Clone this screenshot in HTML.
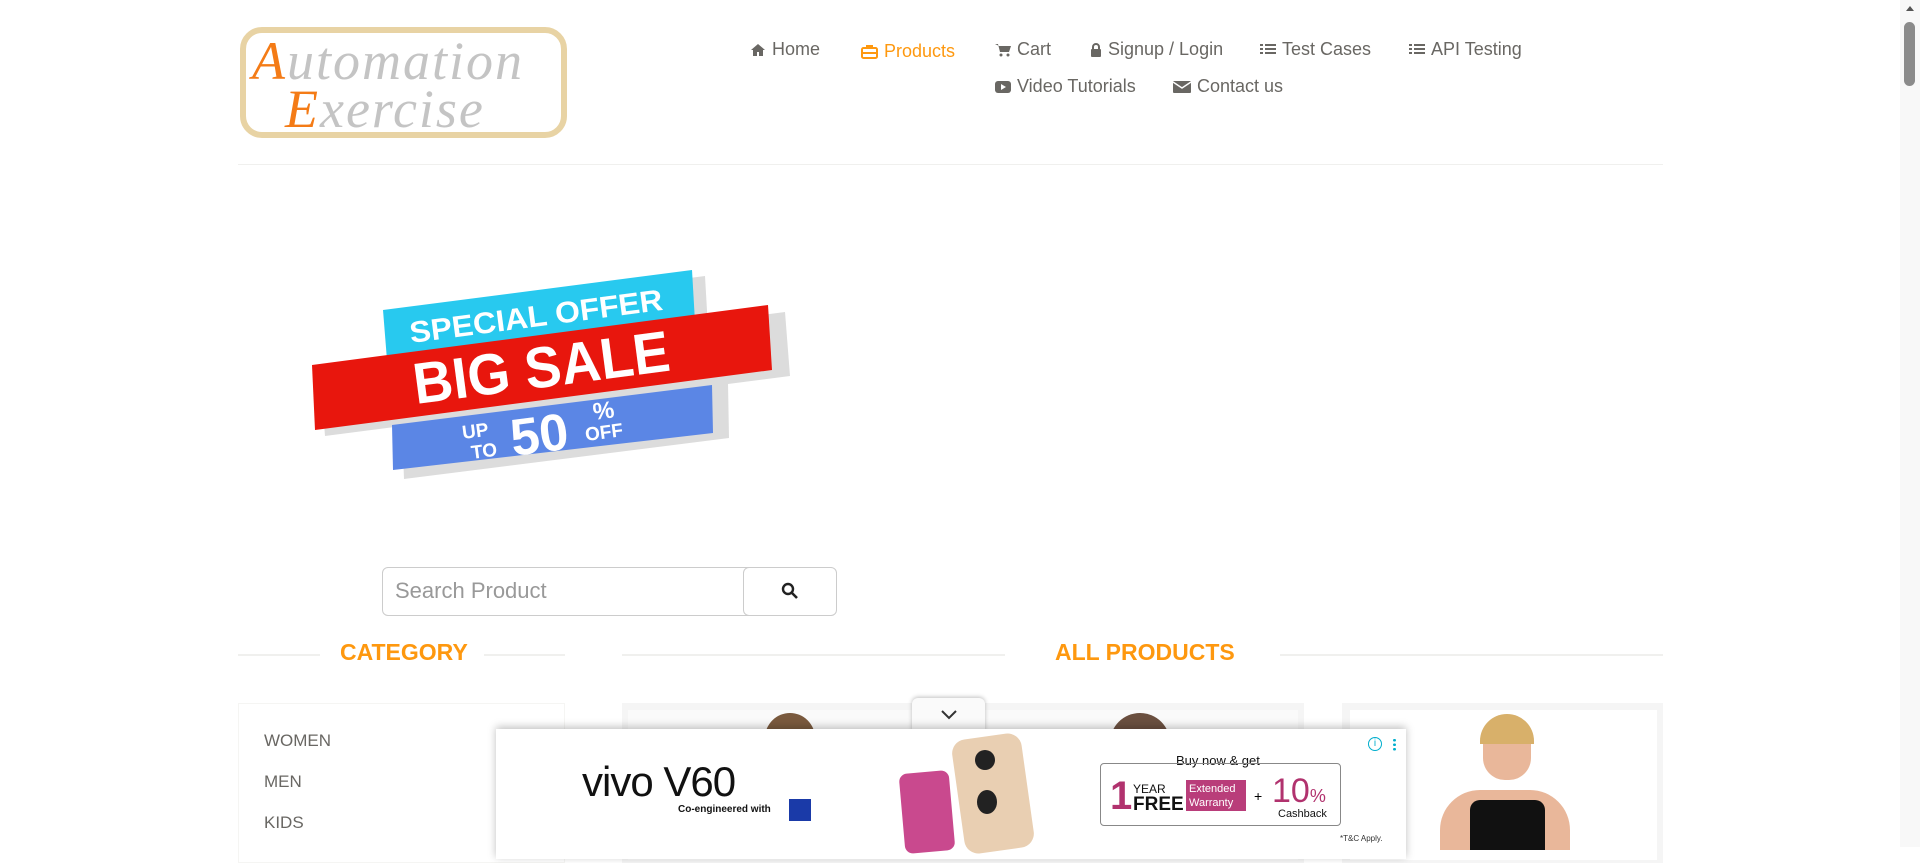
<!DOCTYPE html>
<html><head><meta charset="utf-8"><style>
*{margin:0;padding:0;box-sizing:border-box}
body{width:1920px;height:847px;overflow:hidden;background:#fff;font-family:"Liberation Sans",Arial,sans-serif;position:relative}
.abs{position:absolute}
.nav{color:#696763;font-size:18px;white-space:nowrap}
.nav svg{vertical-align:-2px;margin-right:6px}
.hline{position:absolute;height:2px;background:#f0f0ee}
.title{position:absolute;color:#FE980F;font-weight:bold;font-size:23px}
.cat{position:absolute;left:264px;color:#696763;font-size:17px}
</style></head><body>

<!-- logo -->
<div class="abs" style="left:240px;top:27px;width:327px;height:111px;border:6px solid #e8d3a4;border-radius:22px;background:#fff"></div>
<div class="abs" style="left:252px;top:30px;font-family:'Liberation Serif',serif;font-style:italic;font-size:54px;color:#c4c4c4;letter-spacing:2px"><span style="color:#f47b16">A</span>utomation</div>
<div class="abs" style="left:285px;top:78px;font-family:'Liberation Serif',serif;font-style:italic;font-size:54px;color:#c4c4c4;letter-spacing:2px"><span style="color:#f47b16">E</span>xercise</div>

<!-- nav -->
<div class="abs nav" style="left:750px;top:39px"><svg width="16" height="14" viewBox="0 0 16 14"><path d="M8 1L1 7h2v6h4V9h2v4h4V7h2z" fill="#696763"/></svg>Home</div>
<div class="abs nav" style="left:861px;top:41px;color:#FE980F"><svg width="17" height="14" viewBox="0 0 17 14"><rect x="1" y="3" width="15" height="10" rx="1.5" fill="none" stroke="#FE980F" stroke-width="2"/><path d="M6 3V1h5v2M1 8h15" stroke="#FE980F" stroke-width="2" fill="none"/></svg>Products</div>
<div class="abs nav" style="left:995px;top:39px"><svg width="16" height="14" viewBox="0 0 16 14"><path d="M0 1h3l2 8h9l2-6H4" fill="#696763"/><circle cx="6" cy="12" r="1.5" fill="#696763"/><circle cx="13" cy="12" r="1.5" fill="#696763"/></svg>Cart</div>
<div class="abs nav" style="left:1090px;top:39px"><svg width="12" height="14" viewBox="0 0 12 14"><path d="M3 6V4a3 3 0 016 0v2" stroke="#696763" stroke-width="2" fill="none"/><rect x="1" y="6" width="10" height="8" rx="1" fill="#696763"/></svg>Signup / Login</div>
<div class="abs nav" style="left:1260px;top:39px"><svg width="16" height="14" viewBox="0 0 16 14"><path d="M0 1h3v2H0zM5 1h11v2H5zM0 5h3v2H0zM5 5h11v2H5zM0 9h3v2H0zM5 9h11v2H5z" fill="#696763"/></svg>Test Cases</div>
<div class="abs nav" style="left:1409px;top:39px"><svg width="16" height="14" viewBox="0 0 16 14"><path d="M0 1h3v2H0zM5 1h11v2H5zM0 5h3v2H0zM5 5h11v2H5zM0 9h3v2H0zM5 9h11v2H5z" fill="#696763"/></svg>API Testing</div>
<div class="abs nav" style="left:995px;top:76px"><svg width="16" height="14" viewBox="0 0 16 14"><rect x="0" y="1" width="16" height="12" rx="3" fill="#696763"/><path d="M6 4l5 3-5 3z" fill="#fff"/></svg>Video Tutorials</div>
<div class="abs nav" style="left:1173px;top:76px"><svg width="18" height="14" viewBox="0 0 18 14"><rect x="0" y="1" width="18" height="12" rx="1" fill="#696763"/><path d="M0 2l9 6 9-6" stroke="#fff" stroke-width="1.5" fill="none"/></svg>Contact us</div>

<div class="hline" style="left:238px;top:164px;width:1425px;height:1px"></div>

<!-- banner -->
<svg class="abs" style="left:0;top:0" width="900" height="500">
<polygon points="392,316 705,276 708,328 395,366" fill="#dcdcdc"/>
<polygon points="383,310 692,270 695,322 387,360" fill="#28c9ef"/>
<polygon points="320,372 785,312 790,376 325,436" fill="#dcdcdc"/>
<polygon points="312,365 768,305 772,370 315,430" fill="#e8160d"/>
<polygon points="402,426 728,383 729,438 404,479" fill="#dcdcdc"/>
<polygon points="392,425 712,385 713,433 393,470" fill="#5b86e5"/>
<g fill="#fff" font-family="Liberation Sans,Arial,sans-serif" font-weight="bold">
<text transform="translate(411,343) rotate(-7.5)" font-size="30" textLength="255" lengthAdjust="spacingAndGlyphs">SPECIAL OFFER</text>
<text transform="translate(416,404) rotate(-7.5)" font-size="58" textLength="258" lengthAdjust="spacingAndGlyphs">BIG SALE</text>
<text transform="translate(463,439) rotate(-7.5)" font-size="19">UP</text>
<text transform="translate(472,459) rotate(-7.5)" font-size="19">TO</text>
<text transform="translate(513,456) rotate(-7.5)" font-size="52">50</text>
<text transform="translate(594,420) rotate(-7.5)" font-size="24">%</text>
<text transform="translate(586,441) rotate(-7.5)" font-size="19">OFF</text>
</g>
</svg>

<!-- search -->
<div class="abs" style="left:382px;top:567px;width:371px;height:49px;border:1px solid #ccc;border-radius:6px 0 0 6px"></div>
<div class="abs" style="left:395px;top:578px;font-size:22px;color:#999">Search Product</div>
<div class="abs" style="left:743px;top:567px;width:94px;height:49px;border:1px solid #ccc;border-radius:6px;background:#fff"></div>
<svg class="abs" style="left:781px;top:582px" width="18" height="18" viewBox="0 0 18 18"><circle cx="7" cy="7" r="5" stroke="#222" stroke-width="2.4" fill="none"/><path d="M11 11l5 5" stroke="#222" stroke-width="2.6"/></svg>

<!-- titles -->
<div class="hline" style="left:238px;top:654px;width:82px"></div>
<div class="title" style="left:340px;top:639px">CATEGORY</div>
<div class="hline" style="left:484px;top:654px;width:81px"></div>
<div class="hline" style="left:622px;top:654px;width:383px"></div>
<div class="title" style="left:1055px;top:639px">ALL PRODUCTS</div>
<div class="hline" style="left:1280px;top:654px;width:383px"></div>

<!-- category panel -->
<div class="abs" style="left:238px;top:703px;width:327px;height:160px;border:1px solid #f5f5f3"></div>
<div class="cat" style="top:731px">WOMEN</div>
<div class="cat" style="top:772px">MEN</div>
<div class="cat" style="top:813px">KIDS</div>

<!-- product cards -->
<div class="abs" style="left:622px;top:703px;width:682px;height:160px;background:#f5f5f5"></div>
<div class="abs" style="left:628px;top:710px;width:670px;height:150px;background:#fafafa"></div>
<div class="abs" style="left:1342px;top:703px;width:321px;height:160px;background:#f5f5f5"></div>
<div class="abs" style="left:1350px;top:710px;width:307px;height:150px;background:#fff"></div>
<div class="abs" style="left:765px;top:713px;width:50px;height:40px;border-radius:25px 25px 0 0;background:#7a5a3e"></div>
<div class="abs" style="left:1110px;top:713px;width:60px;height:40px;border-radius:30px 30px 0 0;background:#6b5040"></div>
<!-- woman -->
<div class="abs" style="left:1483px;top:718px;width:48px;height:62px;border-radius:24px 24px 22px 22px;background:#e9b79a"></div>
<div class="abs" style="left:1480px;top:714px;width:54px;height:30px;border-radius:27px 27px 0 0;background:#d8b06a"></div>
<div class="abs" style="left:1440px;top:790px;width:130px;height:60px;border-radius:40px 40px 0 0;background:#e9b79a"></div>
<div class="abs" style="left:1470px;top:800px;width:75px;height:50px;border-radius:10px 10px 0 0;background:#111"></div>

<!-- ad -->
<div class="abs" style="left:912px;top:698px;width:73px;height:33px;background:#fafafa;border-radius:6px 6px 0 0;box-shadow:0 -1px 4px rgba(0,0,0,.25)"></div>
<svg class="abs" style="left:940px;top:709px" width="18" height="12"><path d="M2 2l7 7 7-7" stroke="#333" stroke-width="2" fill="none"/></svg>
<div class="abs" style="left:496px;top:729px;width:910px;height:130px;background:#fff;box-shadow:0 -2px 8px rgba(0,0,0,.25)"></div>
<div class="abs" style="left:582px;top:758px;font-size:42px;color:#111;letter-spacing:-1px">vivo V60</div>
<div class="abs" style="left:678px;top:804px;font-size:10px;color:#111;font-weight:bold">Co-engineered with</div>
<div class="abs" style="left:789px;top:799px;width:22px;height:22px;background:#1a3aa8"></div>
<div class="abs" style="left:902px;top:772px;width:50px;height:80px;border-radius:8px;background:#c9498e;transform:rotate(-5deg)"></div>
<div class="abs" style="left:958px;top:736px;width:70px;height:115px;border-radius:14px;background:#e9cfb2;transform:rotate(-8deg)"></div>
<div class="abs" style="left:975px;top:750px;width:20px;height:20px;border-radius:50%;background:#222"></div>
<div class="abs" style="left:977px;top:790px;width:20px;height:24px;border-radius:50%;background:#222"></div>
<div class="abs" style="left:1176px;top:753px;font-size:13px;color:#111">Buy now &amp; get</div>
<div class="abs" style="left:1100px;top:763px;width:241px;height:63px;border:1.5px solid #888;border-radius:4px"></div>
<div class="abs" style="left:1110px;top:774px;font-size:40px;font-weight:bold;color:#b1326e">1</div>
<div class="abs" style="left:1133px;top:782px;font-size:12px;color:#111">YEAR</div>
<div class="abs" style="left:1133px;top:794px;font-size:19px;font-weight:bold;color:#111">FREE</div>
<div class="abs" style="left:1186px;top:780px;width:60px;height:31px;background:#b93d7a;color:#fff;font-size:11px;line-height:14px;padding:2px 3px">Extended Warranty</div>
<div class="abs" style="left:1254px;top:788px;font-size:14px">+</div>
<div class="abs" style="left:1272px;top:772px;font-size:34px;color:#b1326e">10<span style="font-size:18px">%</span></div>
<div class="abs" style="left:1278px;top:808px;font-size:11px;color:#111">Cashback</div>
<div class="abs" style="left:1340px;top:834px;font-size:8px;color:#333">*T&amp;C Apply.</div>
<div class="abs" style="left:1368px;top:737px;width:14px;height:14px;border:1.5px solid #00aecd;border-radius:50%;color:#00aecd;font-size:10px;text-align:center;line-height:12px">i</div>
<div class="abs" style="left:1393px;top:738px;width:3px;height:13px;background:radial-gradient(circle,#00aecd 1.3px,transparent 1.5px) 0 0/3px 4.5px"></div>

<!-- scrollbar -->
<div class="abs" style="left:1900px;top:0;width:20px;height:847px;background:#f8f8f8"></div>
<div class="abs" style="left:1904px;top:22px;width:11px;height:64px;background:#8b8b8b;border-radius:6px"></div>
<svg class="abs" style="left:1906px;top:6px" width="8" height="6"><path d="M0 5L4 0 8 5z" fill="#555"/></svg>
</body></html>
